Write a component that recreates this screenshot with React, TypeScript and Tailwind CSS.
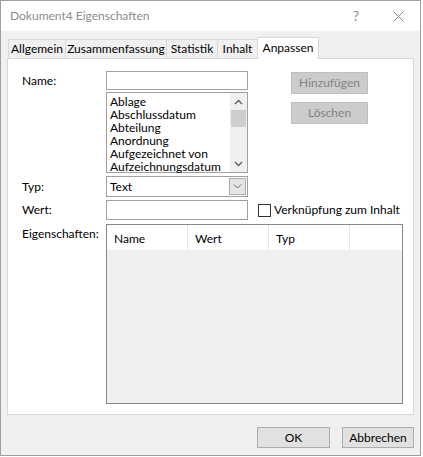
import React from 'react'

const tabs = [
  { label: 'Allgemein', w: 'w-[58px]' },
  { label: 'Zusammenfassung', w: 'w-[102px]' },
  { label: 'Statistik', w: 'w-[52px]' },
  { label: 'Inhalt', w: 'w-[41px]' },
]

const props = ['Ablage', 'Abschlussdatum', 'Abteilung', 'Anordnung', 'Aufgezeichnet von', 'Aufzeichnungsdatum']

function Chevron({ up = false, className = '' }: { up?: boolean; className?: string }) {
  return (
    <svg width="9" height="6" viewBox="0 0 9 6" className={className}>
      <path
        d={up ? 'M1 5 L4.5 1.5 L8 5' : 'M1 1 L4.5 4.5 L8 1'}
        fill="none"
        stroke="#606060"
        strokeWidth="1.4"
      />
    </svg>
  )
}

export default function App() {
  return (
    <div className="w-[423px] h-[457px] bg-white text-[12px] text-black font-['Segoe_UI',Lato,sans-serif] leading-none">
      <div className="w-[421px] h-[456px] border border-[#9f9f9f] bg-[#f0f0f0] flex flex-col">
        {/* title bar */}
        <div className="h-[30px] bg-white flex items-center pl-[9px] shrink-0">
          <span className="text-[12px] text-[#8c8c8c]">Dokument4 Eigenschaften</span>
          <span className="ml-auto mr-[34px] text-[14px] text-[#8c8c8c]">?</span>
          <svg width="11" height="11" viewBox="0 0 11 11" className="mr-[16px]">
            <path d="M0.5 0.5 L10.5 10.5 M10.5 0.5 L0.5 10.5" stroke="#8c8c8c" strokeWidth="1" />
          </svg>
        </div>

        {/* tabs */}
        <div className="pl-[7px] pt-[6px] flex items-end">
          {tabs.map((t) => (
            <div
              key={t.label}
              className={`${t.w} h-[19px] -ml-px first:ml-0 border border-b-0 border-[#d9d9d9] bg-[#f0f0f0] flex items-center justify-center`}
            >
              {t.label}
            </div>
          ))}
          <div className="w-[62px] h-[22px] -ml-px relative z-10 -mb-px border border-b-0 border-[#d9d9d9] bg-white flex items-center justify-center pb-[2px]">
            Anpassen
          </div>
        </div>

        {/* panel */}
        <div className="ml-[6px] w-[407px] h-[357px] bg-white border border-[#d9d9d9] pl-[14px] pt-[12px]">
          <div className="flex">
            <div className="w-[84px] pt-[4px]">Name:</div>
            <div className="w-[142px]">
              <div className="h-[19px] border border-[#a0a0a0] bg-white" />
              <div className="mt-[2px] h-[81px] border border-[#a0a0a0] bg-white flex">
                <div className="flex-1 pl-[3px] pt-[2px]">
                  {props.map((p) => (
                    <div key={p} className="h-[13px] leading-[13px] whitespace-nowrap">
                      {p}
                    </div>
                  ))}
                </div>
                <div className="w-[17px] bg-[#f0f0f0] flex flex-col items-center">
                  <div className="h-[17px] flex items-center justify-center">
                    <Chevron up />
                  </div>
                  <div className="w-[15px] h-[17px] bg-[#cdcdcd]" />
                  <div className="mt-auto h-[17px] flex items-center justify-center">
                    <Chevron />
                  </div>
                </div>
              </div>
            </div>
            <div className="ml-[43px] pt-[1px] flex flex-col gap-[8px]">
              <div className="w-[77px] h-[22px] bg-[#cccccc] border border-[#bfbfbf] text-[#838383] flex items-center justify-center">
                Hinzufügen
              </div>
              <div className="w-[77px] h-[22px] bg-[#cccccc] border border-[#bfbfbf] text-[#838383] flex items-center justify-center">
                Löschen
              </div>
            </div>
          </div>

          <div className="flex mt-[3px] items-center">
            <div className="w-[84px]">Typ:</div>
            <div className="w-[142px] h-[21px] border border-[#a0a0a0] bg-white flex items-center pl-[3px] pr-[1px]">
              <span>Text</span>
              <div className="ml-auto w-[17px] h-[17px] bg-[#e5e5e5] border border-[#adadad] flex items-center justify-center">
                <svg width="9" height="5" viewBox="0 0 9 5">
                  <path d="M1 0.5 L4.5 4 L8 0.5" fill="none" stroke="#606060" strokeWidth="1" />
                </svg>
              </div>
            </div>
          </div>

          <div className="flex mt-[3px] items-center">
            <div className="w-[84px]">Wert:</div>
            <div className="w-[142px] h-[20px] border border-[#a0a0a0] bg-white" />
            <div className="ml-[10px] w-[13px] h-[13px] border border-[#333333] bg-white" />
            <span className="ml-[3px]">Verknüpfung zum Inhalt</span>
          </div>

          <div className="flex mt-[4px]">
            <div className="w-[84px] pt-[4px]">Eigenschaften:</div>
            <div className="w-[297px] h-[180px] border border-[#828790] bg-[#f0f0f0]">
              <div className="h-[25px] bg-white flex">
                {['Name', 'Wert', 'Typ'].map((h) => (
                  <div key={h} className="w-[81px] border-r border-[#e5e5e5] flex items-center pl-[7px] pt-[2px]">
                    {h}
                  </div>
                ))}
              </div>
            </div>
          </div>
        </div>

        {/* footer */}
        <div className="flex justify-end gap-[12px] pr-[6px] pt-[12px]">
          <div className="w-[73px] h-[21px] bg-[#e1e1e1] border border-[#adadad] flex items-center justify-center">OK</div>
          <div className="w-[72px] h-[21px] bg-[#e1e1e1] border border-[#adadad] flex items-center justify-center">Abbrechen</div>
        </div>
      </div>
    </div>
  )
}
